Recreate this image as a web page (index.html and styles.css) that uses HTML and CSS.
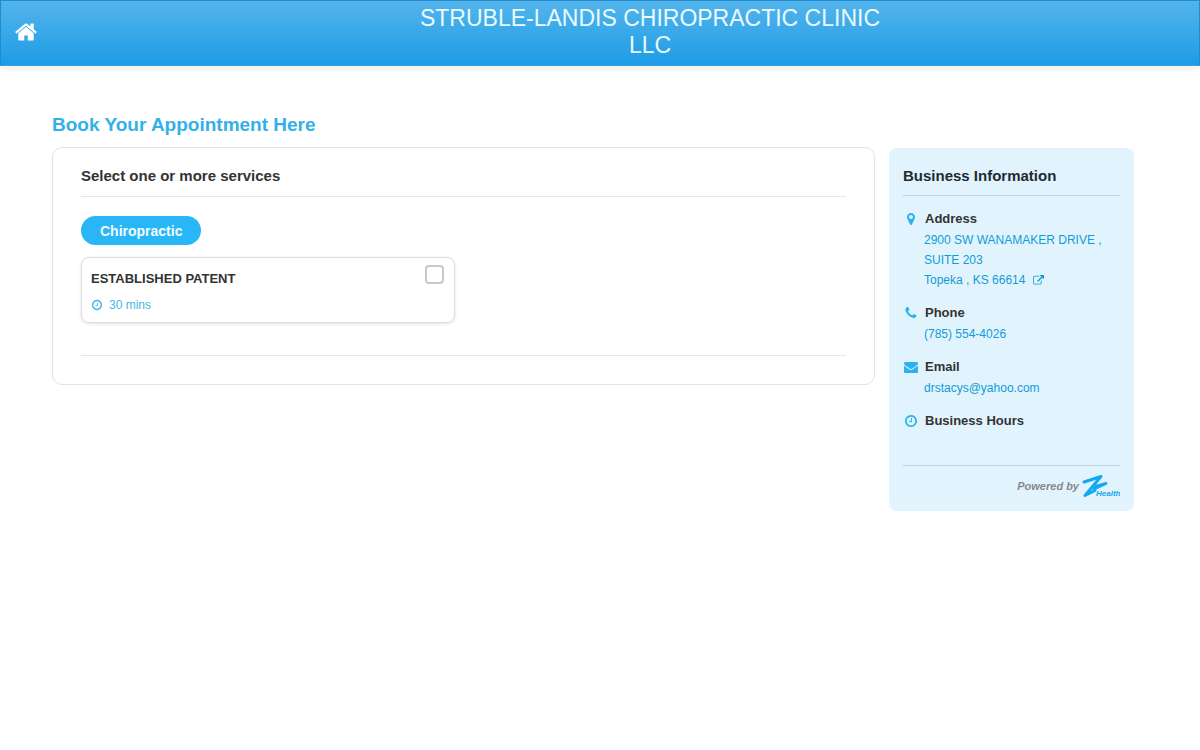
FILE: index.html
```html
<!DOCTYPE html>
<html lang="en">
<head>
<meta charset="utf-8">
<meta name="viewport" content="width=device-width, initial-scale=1">
<title>Struble-Landis Chiropractic Clinic LLC</title>
<link rel="stylesheet" href="styles.css">
</head>
<body>
<header class="topbar">
  <a class="home" href="#" aria-label="Home"><svg class="home-icon" viewBox="0 0 1792 1792" aria-hidden="true"><path d="M1472 992v480q0 26-19 45t-45 19h-384v-384h-256v384h-384q-26 0-45-19t-19-45v-480q0-1 .5-3t.5-3l575-474 575 474q1 2 1 6zm223-69l-62 74q-8 9-21 11h-3q-13 0-21-7l-692-577-692 577q-12 8-24 7-13-2-21-11l-62-74q-8-10-7-23.5t11-21.5l719-599q32-26 76-26t76 26l244 204v-195q0-14 9-23t23-9h192q14 0 23 9t9 23v408l219 182q10 8 11 21.5t-7 23.5z"/></svg></a>
  <div class="brand">STRUBLE-LANDIS CHIROPRACTIC CLINIC LLC</div>
</header>
<div class="page">
  <h1 class="page-title">Book Your Appointment Here</h1>
  <div class="columns">
    <main class="panel">
      <h2 class="panel-title">Select one or more services</h2>
      <button class="pill" type="button">Chiropractic</button>
      <div class="services">
        <label class="service">
          <span class="service-text">
            <span class="service-name">ESTABLISHED PATENT</span>
            <span class="duration"><svg class="icon-small" viewBox="0 0 1792 1792" aria-hidden="true"><path d="M1024 544v448q0 14-9 23t-23 9h-320q-14 0-23-9t-9-23v-64q0-14 9-23t23-9h224v-352q0-14 9-23t23-9h64q14 0 23 9t9 23zm416 352q0-148-73-273t-198-198-273-73-273 73-198 198-73 273 73 273 198 198 273 73 273-73 198-198 73-273zm224 0q0 209-103 385.500t-279.500 279.500-385.500 103-385.500-103-279.500-279.500-103-385.500 103-385.500 279.500-279.500 385.500-103 385.500 103 279.500 279.500 103 385.500z"/></svg>30 mins</span>
          </span>
          <input class="check" type="checkbox">
        </label>
      </div>
      <hr class="panel-end">
    </main>
    <aside class="info">
      <h2 class="info-title">Business Information</h2>
      <section class="item">
        <h3 class="item-title"><svg class="icon" viewBox="0 0 1792 1792" aria-hidden="true"><path d="M1152 640q0-106-75-181t-181-75-181 75-75 181 75 181 181 75 181-75 75-181zm256 0q0 109-33 179l-364 774q-16 33-47.500 52t-67.500 19-67.500-19-46.500-52l-365-774q-33-70-33-179 0-212 150-362t362-150 362 150 150 362z"/></svg>Address</h3>
        <a class="item-link" href="#">2900 SW WANAMAKER DRIVE ,<br>SUITE 203<br>Topeka , KS 66614 <svg class="external" viewBox="0 0 1792 1792" aria-hidden="true"><path d="M1408 928v320q0 119-84.500 203.500t-203.500 84.500h-832q-119 0-203.500-84.500t-84.500-203.500v-832q0-119 84.500-203.500t203.500-84.500h704q14 0 23 9t9 23v64q0 14-9 23t-23 9h-704q-66 0-113 47t-47 113v832q0 66 47 113t113 47h832q66 0 113-47t47-113v-320q0-14 9-23t23-9h64q14 0 23 9t9 23zm384-864v512q0 26-19 45t-45 19-45-19l-176-176-652 652q-10 10-23 10t-23-10l-114-114q-10-10-10-23t10-23l652-652-176-176q-19-19-19-45t19-45 45-19h512q26 0 45 19t19 45z"/></svg></a>
      </section>
      <section class="item">
        <h3 class="item-title"><svg class="icon" viewBox="0 0 1792 1792" aria-hidden="true"><path d="M1600 1240q0 27-10 70.500t-21 68.500q-21 50-122 106-94 51-186 51-27 0-52.500-3.500t-57.500-12.500-47.500-14.500-55.500-20.500-49-18q-98-35-175-83-128-79-264.500-215.500t-215.500-264.500q-48-77-83-175-3-9-18-49t-20.500-55.500-14.500-47.500-12.500-57.500-3.500-52.500q0-92 51-186 56-101 106-122 25-11 68.500-21t70.500-10q14 0 21 3 18 6 53 76 11 19 30 54t35 63.500 31 53.500q3 4 17.500 25t21.500 35.500 7 28.500q0 20-28.500 50t-62 55-62 53-28.500 46q0 9 5 22.500t8.500 20.500 14 24 11.500 19q76 137 174 235t235 174q2 1 19 11.500t24 14 20.500 8.500 22.500 5q18 0 46-28.500t53-62 55-62 50-28.500q14 0 28.500 7t35.500 21.500 25 17.500q25 15 53.500 31t63.500 35 54 30q70 35 76 53 3 7 3 21z"/></svg>Phone</h3>
        <a class="item-link" href="tel:7855544026">(785) 554-4026</a>
      </section>
      <section class="item">
        <h3 class="item-title"><svg class="icon" viewBox="0 0 1792 1792" aria-hidden="true"><path d="M1792 710v794q0 66-47 113t-113 47h-1472q-66 0-113-47t-47-113v-794q44 49 101 87 362 246 497 345 57 42 92.500 65.500t94.500 48 110 24.500h2q51 0 110-24.500t94.500-48 92.500-65.500q170-123 498-345 57-39 100-87zm0-294q0 79-49 151t-122 123q-376 261-468 325-10 7-42.500 31t-54 38.500-52 32.500-57.500 27-50 9h-2q-23 0-50-9t-57.500-27-52-32.500-54-38.500-42.500-31q-91-64-262-182.500t-205-142.500q-62-42-117-115.500t-55-136.500q0-78 41.500-130t118.500-52h1472q65 0 112.500 47t47.500 113z"/></svg>Email</h3>
        <a class="item-link" href="mailto:drstacys@yahoo.com">drstacys@yahoo.com</a>
      </section>
      <section class="item">
        <h3 class="item-title"><svg class="icon" viewBox="0 0 1792 1792" aria-hidden="true"><path d="M1024 544v448q0 14-9 23t-23 9h-320q-14 0-23-9t-9-23v-64q0-14 9-23t23-9h224v-352q0-14 9-23t23-9h64q14 0 23 9t9 23zm416 352q0-148-73-273t-198-198-273-73-273 73-198 198-73 273 73 273 198 198 273 73 273-73 198-198 73-273zm224 0q0 209-103 385.500t-279.500 279.500-385.500 103-385.500-103-279.500-279.500-103-385.500 103-385.500 279.500-279.500 385.500-103 385.500 103 279.500 279.500 103 385.500z"/></svg>Business Hours</h3>
      </section>
      <footer class="powered">Powered by
        <svg class="logo" viewBox="0 0 38 24" role="img" aria-label="Z Health"><path d="M2 8L19 2.500L3 21.500L13 16.500M10 13.500L24 9.500L12 15" fill="none" stroke="#12a9ee" stroke-width="3" stroke-linecap="round" stroke-linejoin="round"/><text class="logo-text" x="14" y="22">Health</text></svg>
      </footer>
    </aside>
  </div>
</div>
</body>
</html>
```
FILE: styles.css
```css
* { box-sizing: border-box; }

body {
  margin: 0;
  background: #fff;
  color: #333;
  font-family: "Liberation Sans", Arial, sans-serif;
  font-size: 12px;
}

h1, h2, h3 { margin: 0; }
a { color: #109cd8; text-decoration: none; }
svg { fill: currentColor; }

.topbar {
  display: grid;
  grid-template-columns: 100px 1fr;
  align-items: center;
  min-height: 66px;
  padding-bottom: 2px;
  border: 1px solid #1f8bd0;
  border-bottom-color: #3a9fdf;
  background: linear-gradient(#54b4eb, #1d9ce6);
  box-shadow: 0 1px 8px rgba(0, 0, 0, 0.1);
}

.home {
  display: flex;
  padding-left: 13px;
  color: #fff;
}

.home-icon { width: 24px; height: 24px; }

.brand {
  justify-self: center;
  max-width: 480px;
  color: #e9fbff;
  font-size: 23px;
  line-height: 27px;
  text-align: center;
}

.page { padding: 46px 66px 24px 52px; }

.page-title {
  margin-bottom: 9px;
  color: #33b0e9;
  font-size: 19px;
  line-height: 26px;
}

.columns {
  display: flex;
  align-items: flex-start;
  gap: 14px;
}

.panel {
  flex: 1;
  padding: 16px 28px 28px;
  border: 1px solid #e2e2e2;
  border-radius: 10px;
}

.panel-title {
  margin-bottom: 19px;
  padding-bottom: 8px;
  border-bottom: 1px solid #e6e6e6;
  font-size: 15px;
  line-height: 24px;
}

.pill {
  display: block;
  height: 29px;
  margin-bottom: 12px;
  padding: 0 19px;
  border: 0;
  border-radius: 15px;
  background: #29b6f6;
  color: #f0fcff;
  font: bold 14px "Liberation Sans", Arial, sans-serif;
}

.services {
  display: grid;
  grid-template-columns: 1fr 1fr;
  gap: 18px;
}

.service {
  display: flex;
  justify-content: space-between;
  align-items: flex-start;
  padding: 7px 10px 7px 9px;
  border: 1px solid #ddd;
  border-radius: 8px;
  box-shadow: 0 1px 3px rgba(0, 0, 0, 0.12);
}

.service-text {
  display: flex;
  flex-direction: column;
  gap: 6px;
  padding-top: 4px;
}

.service-name {
  font-size: 13px;
  font-weight: bold;
  line-height: 20px;
}

.duration {
  display: flex;
  align-items: center;
  gap: 6px;
  color: #45b8e6;
  line-height: 20px;
}

.icon-small { width: 12px; height: 12px; }

.check {
  appearance: none;
  width: 19px;
  height: 19px;
  margin: 0;
  border: 2px solid #c8c8c8;
  border-radius: 4px;
  background: #fff;
}

.check:checked { background: #29b6f6; }

.panel-end {
  margin: 32px 0 0;
  border: 0;
  border-top: 1px solid #e6e6e6;
}

.info {
  flex: 0 0 245px;
  margin-top: 1px;
  padding: 16px 14px 13px;
  border-radius: 8px;
  background: #e1f4fe;
}

.info-title {
  margin-bottom: 12px;
  padding-bottom: 7px;
  border-bottom: 1px solid #bcd3de;
  color: #222a30;
  font-size: 15px;
  line-height: 24px;
}

.item { margin-bottom: 12px; }

.item-title {
  display: flex;
  align-items: center;
  gap: 7px;
  font-size: 13px;
  line-height: 22px;
}

.icon {
  width: 14px;
  height: 14px;
  margin-left: 1px;
  color: #29b2ee;
}

.item-link {
  display: block;
  padding-left: 21px;
  line-height: 20px;
}

.external {
  width: 11px;
  height: 11px;
  margin-left: 4px;
  vertical-align: -2px;
}

.powered {
  display: flex;
  justify-content: flex-end;
  align-items: center;
  gap: 3px;
  margin-top: 33px;
  padding-top: 8px;
  border-top: 1px solid #bcd3de;
  color: #888;
  font-size: 11px;
  font-style: italic;
  font-weight: bold;
}

.logo { width: 38px; height: 24px; }

.logo-text {
  fill: #12a9ee;
  font-size: 8px;
}
```
